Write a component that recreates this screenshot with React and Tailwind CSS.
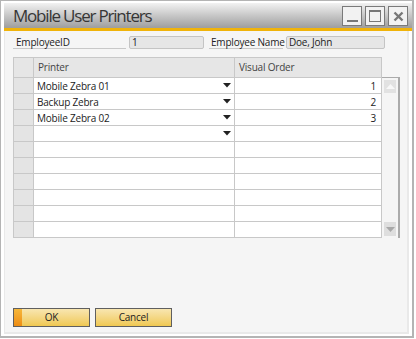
import React from 'react';

const rows = [
  { printer: 'Mobile Zebra 01', order: '1', arrow: true },
  { printer: 'Backup Zebra', order: '2', arrow: true },
  { printer: 'Mobile Zebra 02', order: '3', arrow: true },
  { printer: '', order: '', arrow: true },
  { printer: '', order: '', arrow: false },
  { printer: '', order: '', arrow: false },
  { printer: '', order: '', arrow: false },
  { printer: '', order: '', arrow: false },
  { printer: '', order: '', arrow: false },
  { printer: '', order: '', arrow: false },
];

function WinButton({ children }) {
  return (
    <div className="w-[20px] h-[20px] border border-[#7a7a7a] bg-[#f2f2f2] flex items-center justify-center">
      {children}
    </div>
  );
}

function Field({ label, value, labelW, fieldW, pad }) {
  return (
    <div className="flex items-center">
      <div className={`${labelW} ${pad} h-[13px] border-b border-[#c8c8c8] leading-[12px] text-[#222] whitespace-nowrap`}>{label}</div>
      <div className={`${fieldW} h-[13px] ml-[3px] border border-[#c4c4c4] rounded-[2px] bg-[#e6e6e6] pl-[2px] leading-[11px] text-[#222] whitespace-nowrap`}>
        {value}
      </div>
    </div>
  );
}

function DropArrow() {
  return (
    <svg width="8" height="5" viewBox="0 0 8 5" className="shrink-0">
      <polygon points="0,0 8,0 4,4.5" fill="#222" />
    </svg>
  );
}

export default function App() {
  return (
    <div className="w-[416px] h-[339px] bg-white" style={{ fontFamily: '"Open Sans", "Noto Sans", sans-serif' }}>
      <div className="w-[414px] h-[338px] border-l border-t border-r-2 border-b-2 border-[#b4b4b4] bg-white pl-[3px] pt-[2px] pb-[2px] flex flex-col">
        {/* title bar */}
        <div className="h-[25px] bg-gradient-to-b from-[#f2f2f2] to-[#9e9e9e] flex items-center pl-[9px] pr-[4px]">
          <div className="text-[17px] leading-none text-[#363636] tracking-[-1.2px] pb-[1px]">Mobile User Printers</div>
          <div className="ml-auto flex gap-[3px] pt-[1px]">
            <WinButton>
              <div className="w-[11px] h-[2px] bg-[#777] mt-[10px]" />
            </WinButton>
            <WinButton>
              <div className="w-[12px] h-[12px] border border-[#777] border-t-2" />
            </WinButton>
            <WinButton>
              <svg width="11" height="11" viewBox="0 0 11 11">
                <path d="M1.5 1.5 L9.5 9.5 M9.5 1.5 L1.5 9.5" stroke="#777" strokeWidth="2.4" />
              </svg>
            </WinButton>
          </div>
        </div>
        <div className="h-[3px] bg-[#f0b30a]" />

        {/* content */}
        <div className="flex-1 mr-[3px] bg-[#f5f5f5] border-l border-r-2 border-b-2 border-[#e9e9e9] text-[10px] tracking-[-0.2px] flex flex-col pl-[8px]">
          <div className="flex items-center mt-[5px] h-[13px]">
            <Field label="EmployeeID" value="1" labelW="w-[113px]" fieldW="w-[75px]" pad="pl-[3px]" />
            <div className="ml-[5px]">
              <Field label="Employee Name" value="Doe, John" labelW="w-[74px]" fieldW="w-[99px]" pad="pl-[2px]" />
            </div>
          </div>

          {/* grid */}
          <div className="flex mt-[8px]">
            <div className="w-[369px] border-l border-t border-[#c8c8c8]">
              <div className="flex h-[20px] bg-[#e6e6e6] border-b border-[#c8c8c8]">
                <div className="w-[20px] border-r border-[#c8c8c8]" />
                <div className="w-[201px] border-r border-[#c8c8c8] pl-[4px] leading-[18px] text-[#444]">Printer</div>
                <div className="flex-1 border-r border-[#c8c8c8] pl-[4px] leading-[18px] text-[#444]">Visual Order</div>
              </div>
              {rows.map((r, i) => (
                <div key={i} className="flex h-[16px] border-b border-[#c8c8c8] bg-white">
                  <div className="w-[20px] bg-[#e4e4e4] border-r border-[#c8c8c8]" />
                  <div className="w-[201px] border-r border-[#c8c8c8] pl-[3px] pr-[3px] flex items-center text-[#222]">
                    <span className="flex-1 leading-none">{r.printer}</span>
                    {r.arrow && <DropArrow />}
                  </div>
                  <div className="flex-1 border-r border-[#c8c8c8] pr-[5px] flex items-center justify-end text-[#222] leading-none">{r.order}</div>
                </div>
              ))}
            </div>
            {/* scrollbar */}
            <div className="w-[18px] mt-[20px] h-[161px] border-t border-r-2 border-[#ababab] flex flex-col justify-between px-[2px] py-[2px]">
              <div className="h-[13px] bg-[#e2e2e2] flex items-center justify-center">
                <svg width="9" height="5" viewBox="0 0 9 5"><polygon points="0,5 9,5 4.5,0" fill="#f8f8f8" /></svg>
              </div>
              <div className="h-[14px] bg-[#dedede] flex items-center justify-center">
                <svg width="9" height="5" viewBox="0 0 9 5"><polygon points="0,0 9,0 4.5,5" fill="#a8a8a8" /></svg>
              </div>
            </div>
          </div>

          {/* buttons */}
          <div className="mt-auto mb-[5px] flex gap-[5px]">
            <div className="relative w-[77px] h-[19px] border border-[#5f5f5f] bg-gradient-to-b from-[#f8e6b0] to-[#f0c850] flex items-center justify-center text-[#222] overflow-hidden">
              <div className="absolute left-0 top-0 bottom-0 w-[8px] bg-gradient-to-b from-[#f5b73a] to-[#ee8c10]" />
              <span className="relative">OK</span>
            </div>
            <div className="w-[77px] h-[19px] border border-[#5f5f5f] bg-gradient-to-b from-[#f8e6b0] to-[#f0c850] flex items-center justify-center text-[#222]">
              Cancel
            </div>
          </div>
        </div>
      </div>
    </div>
  );
}
